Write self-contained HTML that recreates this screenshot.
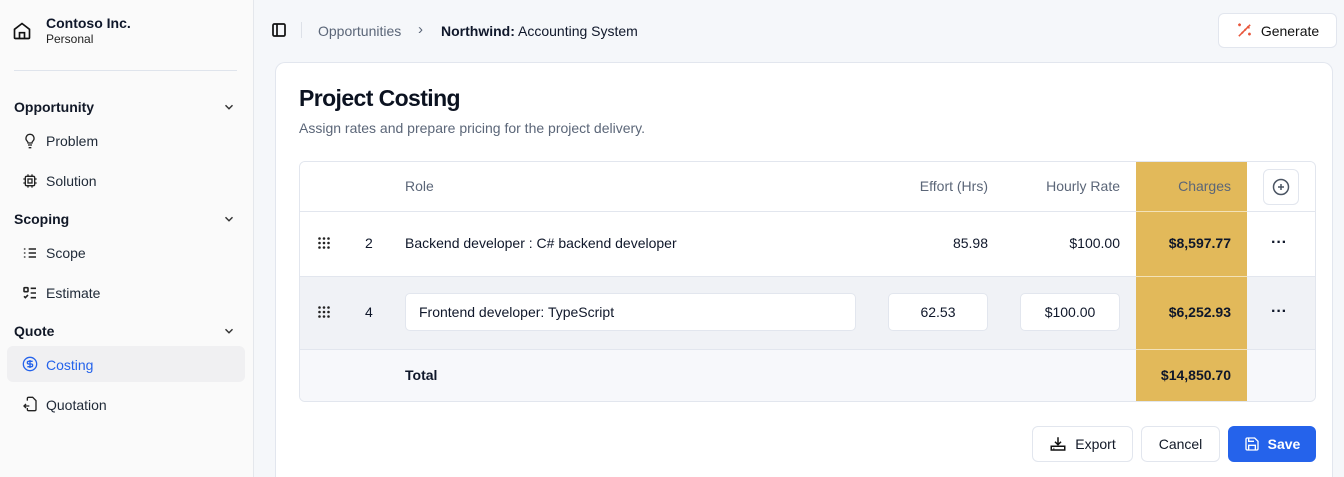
<!DOCTYPE html>
<html><head><meta charset="utf-8"><style>
*{box-sizing:border-box;margin:0;padding:0}
html{width:1344px;height:477px;overflow:hidden}
body{width:1344px;height:477px;overflow:hidden;font-family:"Liberation Sans",sans-serif;background:#f5f7fa;position:relative;color:#0f172a;font-size:14px}
.side{position:absolute;left:0;top:0;width:254px;height:477px;background:#fafafa;border-right:1px solid #e4e7ec}
.abs{position:absolute}
.sec{position:absolute;left:14px;font-weight:bold;font-size:14px;color:#111827}
.chev{position:absolute;left:222px}
.item{position:absolute;left:46px;font-size:14px;color:#1f2937}
.ic{position:absolute;left:22px}
.card{position:absolute;left:275px;top:62px;width:1058px;height:415px;background:#fff;border:1px solid #e2e6ee;border-bottom:none;border-radius:10px 10px 0 0}
.tbl{position:absolute;left:299px;top:161px;width:1017px;height:241px;border:1px solid #e2e6ee;border-radius:6px;overflow:hidden}
.row{position:absolute;left:0;width:1015px;border-bottom:1px solid #e2e6ee}
.charge{position:absolute;left:836px;width:111px;background:#e2b95a;top:0;height:241px}
.t{position:absolute;font-size:14px}
.r{text-align:right}
.inp{position:absolute;background:#fff;border:1px solid #e2e6ee;border-radius:5px;height:38px;line-height:36px;font-size:14px}
.btn{position:absolute;border:1px solid #e2e6ee;border-radius:6px;background:#fff;font-size:14px;font-weight:bold;color:#111827;display:flex;align-items:center;justify-content:center;gap:8px}
</style></head><body>
<div class="side">
<svg class="abs" style="left:12px;top:21px" width="20" height="20" viewBox="0 0 24 24" fill="none" stroke="#111" stroke-width="2"><path d="M3 10l9-7 9 7v10a1 1 0 0 1-1 1H4a1 1 0 0 1-1-1z"/><path d="M9 21v-7h6v7"/></svg>
<div class="abs" style="left:46px;top:15px;font-weight:bold;font-size:14px">Contoso Inc.</div>
<div class="abs" style="left:46px;top:32px;font-size:12px;color:#222">Personal</div>
<div class="abs" style="left:14px;top:70px;width:223px;height:1px;background:#dfe4ec"></div>
<div class="sec" style="top:99px">Opportunity</div>
<svg class="chev" style="top:100px" width="14" height="14" viewBox="0 0 24 24" fill="none" stroke="#333" stroke-width="2.5"><path d="M6 9l6 6 6-6"/></svg>
<svg class="ic" style="top:133px" width="16" height="16" viewBox="0 0 24 24" fill="none" stroke="#222" stroke-width="2"><path d="M9 18h6M10 22h4M12 2a6 6 0 0 0-4 10.5c.8.8 1 1.5 1 2.5h6c0-1 .2-1.7 1-2.5A6 6 0 0 0 12 2z"/></svg>
<div class="item" style="top:133px">Problem</div>
<svg class="ic" style="top:173px" width="16" height="16" viewBox="0 0 24 24" fill="none" stroke="#222" stroke-width="2"><rect x="5" y="5" width="14" height="14" rx="2"/><rect x="9" y="9" width="6" height="6"/><path d="M9 2v3M15 2v3M9 19v3M15 19v3M2 9h3M2 15h3M19 9h3M19 15h3"/></svg>
<div class="item" style="top:173px">Solution</div>
<div class="sec" style="top:211px">Scoping</div>
<svg class="chev" style="top:212px" width="14" height="14" viewBox="0 0 24 24" fill="none" stroke="#333" stroke-width="2.5"><path d="M6 9l6 6 6-6"/></svg>
<svg class="ic" style="top:245px" width="16" height="16" viewBox="0 0 24 24" fill="none" stroke="#222" stroke-width="2.4"><path d="M10 6h11M10 12h11M10 18h11M4 5v2M4 11v2M4 17v2"/></svg>
<div class="item" style="top:245px">Scope</div>
<svg class="ic" style="top:285px" width="16" height="16" viewBox="0 0 24 24" fill="none" stroke="#222" stroke-width="2.4"><rect x="3" y="4" width="6" height="6" rx="1"/><path d="M3 17l2 2 4-4M13 5h8M13 12h8M13 19h8"/></svg>
<div class="item" style="top:285px">Estimate</div>
<div class="sec" style="top:323px">Quote</div>
<svg class="chev" style="top:324px" width="14" height="14" viewBox="0 0 24 24" fill="none" stroke="#333" stroke-width="2.5"><path d="M6 9l6 6 6-6"/></svg>
<div class="abs" style="left:7px;top:346px;width:238px;height:36px;background:#f0f0f2;border-radius:6px"></div>
<svg class="ic" style="top:356px" width="16" height="16" viewBox="0 0 24 24" fill="none" stroke="#2563eb" stroke-width="2"><circle cx="12" cy="12" r="10"/><path d="M16 8h-6a2 2 0 1 0 0 4h4a2 2 0 1 1 0 4H8M12 18V6"/></svg>
<div class="item" style="top:357px;color:#2563eb">Costing</div>
<svg class="ic" style="top:396px" width="16" height="16" viewBox="0 0 24 24" fill="none" stroke="#222" stroke-width="2"><path d="M8 7V4a2 2 0 0 1 2-2h6l5 5v13a2 2 0 0 1-2 2H10a2 2 0 0 1-2-2v-2"/><path d="M11 15H3M6 12l-3 3 3 3"/></svg>
<div class="item" style="top:397px">Quotation</div>
</div>

<svg class="abs" style="left:271px;top:22px" width="16" height="16" viewBox="0 0 24 24" fill="none" stroke="#111" stroke-width="2.6"><rect x="3" y="3" width="18" height="18" rx="2"/><path d="M9 3v18"/></svg>
<div class="abs" style="left:301px;top:22px;width:1px;height:16px;background:#dde1e8"></div>
<div class="abs" style="left:318px;top:23px;color:#5b6678">Opportunities</div>
<div class="abs" style="left:418px;top:21px;color:#5b6678;font-size:15px">›</div>
<div class="abs" style="left:441px;top:23px"><b>Northwind:</b> Accounting System</div>
<div class="btn" style="left:1218px;top:13px;width:119px;height:35px;font-weight:normal;color:#111"><svg width="17" height="17" viewBox="0 0 24 24" fill="none" stroke="#e8553a" stroke-width="2.2"><path d="M20 4L6 18l-2 2M16 6l3 3M12 10l2 2M8 14l2 2M5 2v4M3 4h4M19 15v4M17 17h4"/></svg>Generate</div>

<div class="card"></div>
<div class="abs" style="left:299px;top:85px;font-size:23px;font-weight:bold;letter-spacing:-0.6px;color:#0b1220">Project Costing</div>
<div class="abs" style="left:299px;top:120px;font-size:14px;color:#5b6678">Assign rates and prepare pricing for the project delivery.</div>

<div class="tbl">
<div class="row" style="top:0;height:50px;background:#fff"></div>
<div class="row" style="top:50px;height:65px;background:#fff"></div>
<div class="row" style="top:115px;height:73px;background:#f0f2f6"></div>
<div class="row" style="top:188px;height:53px;background:#f7f8fb;border-bottom:none"></div>
<div class="charge"></div>
<div class="abs" style="left:836px;top:49px;width:111px;height:1px;background:#f3e2b8"></div>
<div class="abs" style="left:836px;top:114px;width:111px;height:1px;background:#f3e2b8"></div>
<div class="abs" style="left:836px;top:187px;width:111px;height:1px;background:#f3e2b8"></div>
<div class="t" style="left:105px;top:16px;color:#5b6678">Role</div>
<div class="t r" style="left:560px;width:128px;top:16px;color:#5b6678">Effort (Hrs)</div>
<div class="t r" style="left:700px;width:120px;top:16px;color:#5b6678">Hourly Rate</div>
<div class="t r" style="left:836px;width:95px;top:16px;color:#5b6678">Charges</div>
<div class="abs" style="left:963px;top:7px;width:36px;height:36px;border:1px solid #e2e6ee;border-radius:6px;background:#fff"></div>
<svg class="abs" style="left:972px;top:16px" width="18" height="18" viewBox="0 0 24 24" fill="none" stroke="#4b5563" stroke-width="2"><circle cx="12" cy="12" r="10"/><path d="M12 8v8M8 12h8"/></svg>
<svg class="abs" style="left:17px;top:74px" width="14" height="14" viewBox="0 0 14 14" fill="#222"><circle cx="2.5" cy="2.5" r="1.3"/><circle cx="7" cy="2.5" r="1.3"/><circle cx="11.5" cy="2.5" r="1.3"/><circle cx="2.5" cy="7" r="1.3"/><circle cx="7" cy="7" r="1.3"/><circle cx="11.5" cy="7" r="1.3"/><circle cx="2.5" cy="11.5" r="1.3"/><circle cx="7" cy="11.5" r="1.3"/><circle cx="11.5" cy="11.5" r="1.3"/></svg>
<div class="t" style="left:65px;top:73px">2</div>
<div class="t" style="left:105px;top:73px">Backend developer : C# backend developer</div>
<div class="t r" style="left:560px;width:128px;top:73px">85.98</div>
<div class="t r" style="left:700px;width:120px;top:73px">$100.00</div>
<div class="t r" style="left:836px;width:95px;top:73px;font-weight:bold">$8,597.77</div>
<div class="t" style="left:971px;top:72px;font-weight:bold;font-size:16px">···</div>
<svg class="abs" style="left:17px;top:143px" width="14" height="14" viewBox="0 0 14 14" fill="#222"><circle cx="2.5" cy="2.5" r="1.3"/><circle cx="7" cy="2.5" r="1.3"/><circle cx="11.5" cy="2.5" r="1.3"/><circle cx="2.5" cy="7" r="1.3"/><circle cx="7" cy="7" r="1.3"/><circle cx="11.5" cy="7" r="1.3"/><circle cx="2.5" cy="11.5" r="1.3"/><circle cx="7" cy="11.5" r="1.3"/><circle cx="11.5" cy="11.5" r="1.3"/></svg>
<div class="t" style="left:65px;top:142px">4</div>
<div class="inp" style="left:105px;top:131px;width:451px;padding-left:13px">Frontend developer: TypeScript</div>
<div class="inp" style="left:588px;top:131px;width:100px;text-align:center">62.53</div>
<div class="inp" style="left:720px;top:131px;width:100px;text-align:center">$100.00</div>
<div class="t r" style="left:836px;width:95px;top:142px;font-weight:bold">$6,252.93</div>
<div class="t" style="left:971px;top:141px;font-weight:bold;font-size:16px">···</div>
<div class="t" style="left:105px;top:205px;font-weight:bold">Total</div>
<div class="t r" style="left:836px;width:95px;top:205px;font-weight:bold">$14,850.70</div>
</div>

<div class="btn" style="left:1032px;top:426px;width:101px;height:36px"><svg width="18" height="18" viewBox="0 0 24 24" fill="none" stroke="#111" stroke-width="2"><path d="M12 3v10M8 9l4 4 4-4M3 15h18v5H3zM6 18h1"/></svg><span style="font-weight:normal">Export</span></div>
<div class="btn" style="left:1141px;top:426px;width:79px;height:36px;font-weight:normal">Cancel</div>
<div class="btn" style="left:1228px;top:426px;width:88px;height:36px;background:#2563eb;border-color:#2563eb;color:#fff"><svg width="16" height="16" viewBox="0 0 24 24" fill="none" stroke="#fff" stroke-width="2"><path d="M5 3h11l5 5v11a2 2 0 0 1-2 2H5a2 2 0 0 1-2-2V5a2 2 0 0 1 2-2z"/><path d="M7 3v5h8M7 21v-7h10v7"/></svg>Save</div>
</body></html>
